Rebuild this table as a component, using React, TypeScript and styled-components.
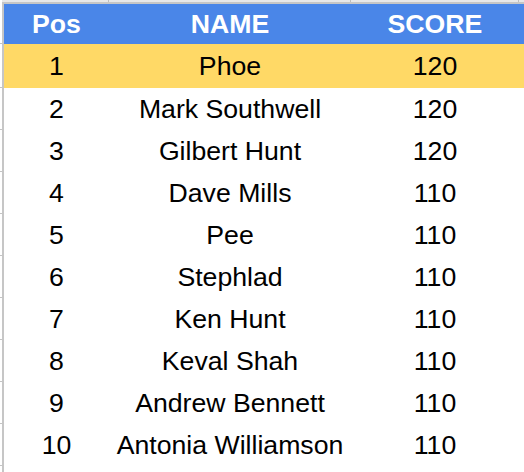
import styled, { createGlobalStyle } from 'styled-components';

const GlobalStyle = createGlobalStyle`
  html, body {
    margin: 0;
    padding: 0;
    background: #ffffff;
  }
  body {
    font-family: "Liberation Sans", Arial, sans-serif;
    color: #000000;
  }
`;

const COLS = '105px 242px 168px 1fr';

const Sheet = styled.div`
  width: 524px;
  height: 472px;
  display: grid;
  grid-template-columns: 2px 1fr;
  grid-template-rows: 2px 1fr;
  overflow: hidden;
  background: #ffffff;
`;

const Corner = styled.div`
  background: #ffffff;
`;

const TopGutter = styled.div`
  display: grid;
  grid-template-columns: 2px ${COLS};
  background: #e8e8e8;
`;

const TopTick = styled.div<{ $tick?: boolean }>`
  border-right: 1px solid ${(p) => (p.$tick ? '#bdbdbd' : 'transparent')};
`;

const LeftGutter = styled.div`
  display: grid;
  grid-template-rows: 2px 40px 44px repeat(10, 42px);
`;

const LeftTick = styled.div`
  border-bottom: 1px solid #c4c4c4;
`;

const Grid = styled.div`
  border-left: 2px solid #c6c6c6;
  border-top: 2px solid #c6c6c6;
  display: flex;
  flex-direction: column;
`;

const Row = styled.div<{ $kind: 'head' | 'top' | 'plain' }>`
  display: grid;
  grid-template-columns: ${COLS};
  height: ${(p) => (p.$kind === 'head' ? 40 : p.$kind === 'top' ? 44 : 42)}px;
  background: ${(p) =>
    p.$kind === 'head' ? '#4a86e8' : p.$kind === 'top' ? '#ffd966' : '#ffffff'};
  color: ${(p) => (p.$kind === 'head' ? '#ffffff' : '#000000')};
  font-weight: ${(p) => (p.$kind === 'head' ? 700 : 400)};
  font-size: 20pt;
`;

const Cell = styled.div`
  display: flex;
  align-items: center;
  justify-content: center;
  white-space: nowrap;
  line-height: 1;
`;

const players = [
  { pos: 1, name: 'Phoe', score: 120 },
  { pos: 2, name: 'Mark Southwell', score: 120 },
  { pos: 3, name: 'Gilbert Hunt', score: 120 },
  { pos: 4, name: 'Dave Mills', score: 110 },
  { pos: 5, name: 'Pee', score: 110 },
  { pos: 6, name: 'Stephlad', score: 110 },
  { pos: 7, name: 'Ken Hunt', score: 110 },
  { pos: 8, name: 'Keval Shah', score: 110 },
  { pos: 9, name: 'Andrew Bennett', score: 110 },
  { pos: 10, name: 'Antonia Williamson', score: 110 },
];

export default function App() {
  return (
    <>
      <GlobalStyle />
      <Sheet>
        <Corner />
        <TopGutter>
          <TopTick />
          <TopTick $tick />
          <TopTick $tick />
          <TopTick $tick />
          <TopTick />
        </TopGutter>
        <LeftGutter>
          <div />
          <LeftTick />
          <LeftTick />
          {players.map((p) => <LeftTick key={p.pos} />)}
        </LeftGutter>
        <Grid>
          <Row $kind="head">
            <Cell>Pos</Cell>
            <Cell>NAME</Cell>
            <Cell>SCORE</Cell>
            <Cell />
          </Row>
          {players.map((p) => (
            <Row key={p.pos} $kind={p.pos === 1 ? 'top' : 'plain'}>
              <Cell>{p.pos}</Cell>
              <Cell>{p.name}</Cell>
              <Cell>{p.score}</Cell>
              <Cell />
            </Row>
          ))}
        </Grid>
      </Sheet>
    </>
  );
}
